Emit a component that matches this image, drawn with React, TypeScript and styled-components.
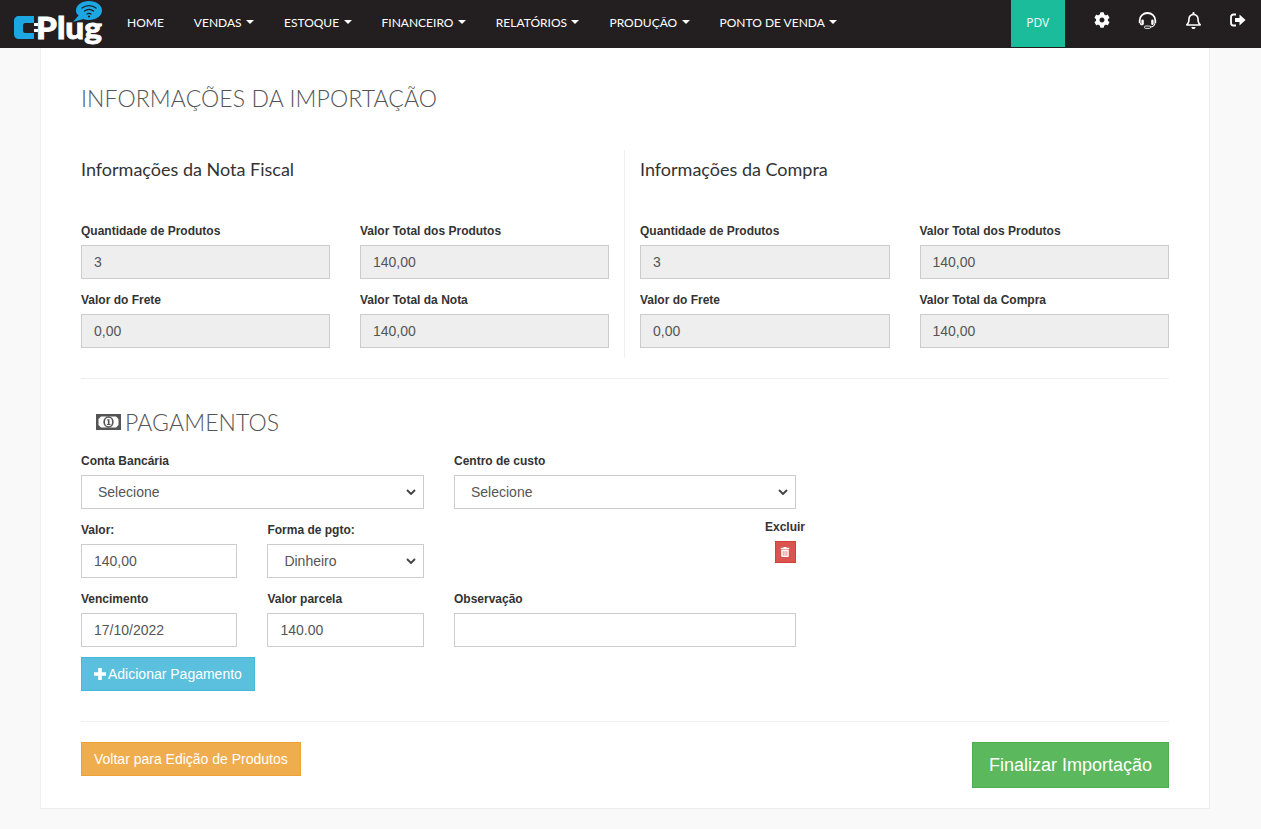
import React from "react";
import styled, { createGlobalStyle } from "styled-components";
import { FaCog, FaRegBell, FaTrashAlt } from "react-icons/fa";

const Global = createGlobalStyle`
  * { box-sizing: border-box; }
  html, body { margin: 0; padding: 0; height: 100%; overflow: hidden; }
  body { background: #f9f9f9; font-family: "Liberation Sans", Arial, sans-serif; font-size: 14px; color: #333; }
`;

const TopBar = styled.header`
  height: 48px;
  background: #231f20;
  display: flex;
  align-items: stretch;
`;
const LogoBox = styled.div`
  width: 112px;
  flex: none;
  padding-left: 13px;
`;
const Menu = styled.nav`
  display: flex;
  align-items: center;
  height: 44px;
`;
const MenuItem = styled.a`
  font-family: Lato, sans-serif;
  font-size: 12px;
  font-weight: 400;
  color: #fff;
  padding: 0 15px;
  display: flex;
  align-items: center;
  white-space: nowrap;
`;
const Caret = styled.span`
  display: inline-block;
  margin-left: 4.4px;
  border-top: 4px solid #fff;
  border-left: 4px solid transparent;
  border-right: 4px solid transparent;
`;
const RightBar = styled.div`
  margin-left: auto;
  display: flex;
  height: 47px;
`;
const PdvLink = styled.a`
  width: 54px;
  background: #1abc9c;
  color: #eafaf6;
  font-family: "Noto Sans", sans-serif;
  font-size: 12px;
  padding-bottom: 3px;
  display: flex;
  align-items: center;
  justify-content: center;
  margin-right: 15px;
`;
const IconLink = styled.a`
  width: 45.33px;
  height: 40px;
  display: flex;
  align-items: center;
  justify-content: center;
  color: #fff;
  font-size: 16px;
`;
const BellLink = styled(IconLink)`
  font-size: 17px;
`;

const Card = styled.main`
  width: 1170px;
  height: 761px;
  margin-left: 40px;
  background: #fff;
  border: 1px solid #eee;
  border-top: 0;
  padding: 37px 40px 0;
`;
const PageTitle = styled.h1`
  margin: 0 0 39px;
  font-family: Lato, sans-serif;
  font-weight: 300;
  font-size: 23px;
  letter-spacing: 0.1px;
  line-height: 26px;
  color: #555;
`;
const Summary = styled.section`
  display: flex;
  height: 208px;
`;
const SummaryColumn = styled.div<{ $divided?: boolean }>`
  padding-top: 9px;
  ${(p) =>
    p.$divided
      ? "width: 544px; padding-right: 15px; border-right: 1px solid #eee;"
      : "width: 529px; margin-left: 15px;"}
`;
const SubTitle = styled.h4`
  margin: 0 0 45px;
  font-family: Lato, sans-serif;
  font-weight: 400;
  font-size: 18px;
  line-height: 20px;
  color: #333;
`;
const TwoFields = styled.div`
  display: grid;
  grid-template-columns: 1fr 1fr;
  column-gap: 30px;
  row-gap: 14px;
`;
const Field = styled.div<{ $span?: number }>`
  display: flex;
  flex-direction: column;
  min-width: 0;
  ${(p) => (p.$span ? `grid-column: span ${p.$span};` : "")}
`;
const Label = styled.label`
  display: block;
  height: 15px;
  margin-bottom: 6px;
  font-size: 12px;
  line-height: 15px;
  font-weight: 700;
  color: #333;
  white-space: nowrap;
`;
const TextBox = styled.input`
  display: block;
  width: 100%;
  height: 34px;
  padding: 6px 12px;
  font-family: "Liberation Sans", Arial, sans-serif;
  font-size: 14px;
  color: #555;
  background: #fff;
  border: 1px solid #ccc;
  border-radius: 0;
  outline: none;
  &:disabled {
    background: #eee;
    color: #555;
    opacity: 1;
    -webkit-text-fill-color: #555;
  }
`;
const chevron = encodeURIComponent(
  '<svg xmlns="http://www.w3.org/2000/svg" width="10" height="6" viewBox="0 0 10 6"><path d="M1 1l4 4 4-4" fill="none" stroke="#444" stroke-width="1.900"/></svg>'
);
const SelectBox = styled.select`
  display: block;
  width: 100%;
  height: 34px;
  padding: 6px 20px 6px 16px;
  appearance: none;
  font-family: "Liberation Sans", Arial, sans-serif;
  font-size: 14px;
  color: #555;
  background: #fff url("data:image/svg+xml,${chevron}") no-repeat right 7px center;
  border: 1px solid #ccc;
  border-radius: 0;
  outline: none;
`;
const Rule = styled.hr<{ $top: number; $bottom: number }>`
  border: 0;
  border-top: 1px solid #eee;
  margin: ${(p) => p.$top}px 0 ${(p) => p.$bottom}px;
`;
const PaymentsTitle = styled.h2`
  display: flex;
  align-items: center;
  gap: 4px;
  margin: 0 0 19px;
  padding-left: 15px;
  font-family: Lato, sans-serif;
  font-weight: 300;
  font-size: 23px;
  letter-spacing: 0.1px;
  line-height: 26px;
  color: #555;
`;
const PaymentsGrid = styled.div`
  display: grid;
  width: 715px;
  grid-template-columns: 156.4px 156.6px 342px;
  column-gap: 30px;
  row-gap: 14px;
`;
const DeleteCell = styled.div`
  justify-self: end;
  width: 21px;
  display: flex;
  flex-direction: column;
  align-items: center;
  margin-top: -3px;
`;
const DeleteLabel = styled.span`
  font-size: 12px;
  line-height: 15px;
  font-weight: 700;
  color: #333;
  margin: 0 1px 6px 0;
  white-space: nowrap;
`;
const DeleteButton = styled.button`
  width: 21px;
  height: 22px;
  flex: none;
  padding: 0;
  display: flex;
  align-items: center;
  justify-content: center;
  background: #d9534f;
  border: 1px solid #d43f3a;
  color: #fff;
  font-size: 10px;
`;
const ActionButton = styled.button<{ $bg: string; $edge: string }>`
  height: 34px;
  padding: 0 12px;
  display: inline-flex;
  align-items: center;
  background: ${(p) => p.$bg};
  border: 1px solid ${(p) => p.$edge};
  color: #fff;
  font-family: "Liberation Sans", Arial, sans-serif;
  font-size: 14px;
  white-space: nowrap;
`;
const AddRow = styled.div`
  margin-top: 10px;
`;
const PlusMark = styled.svg`
  flex: none;
  width: 12px;
  height: 12px;
  margin-right: 2px;
`;
const Footer = styled.div`
  display: flex;
  justify-content: space-between;
  align-items: flex-start;
`;
const FinishButton = styled.button`
  width: 197px;
  height: 46px;
  padding: 0;
  background: #5cb85c;
  border: 1px solid #4cae4c;
  color: #fff;
  font-family: "Liberation Sans", Arial, sans-serif;
  font-size: 18px;
`;

const Logo = () => (
  <svg width="96" height="48" viewBox="0 0 96 48" aria-label="CPlug logo">
    <path d="M1 21c0-3 2-5 5-5h15v7h-9c-1 0-2 1-2 2v6c0 1 1 2 2 2h9v6H6c-3 0-5-2-5-5z" fill="#1ca6e2" />
    <text x="23" y="39" fontFamily="Lato, sans-serif" fontWeight="900" fontSize="31" fill="#fff" textLength="66" lengthAdjust="spacingAndGlyphs" stroke="#fff" strokeWidth="0.8">Plug</text>
    <rect x="21" y="23" width="4" height="3" fill="#fff" />
    <rect x="21" y="29" width="4" height="3" fill="#fff" />
    <path d="M76 1c7 0 13 4 13 9.500S83 20 76 20c-2 0-4-.4-5.500-1L60 22l5.500-6.500c-2-1.500-2.500-3-2.500-5C63 5 69 1 76 1z" fill="#1ca6e2" />
    <g fill="none" stroke="#231f20" strokeWidth="1.300" strokeLinecap="round">
      <path d="M69 8c4-3.200 10-3.200 14 0" />
      <path d="M71.500 11c2.700-2 6.300-2 9 0" />
      <path d="M74 14c1.200-.8 2.800-.8 4 0" />
    </g>
    <circle cx="76" cy="16.500" r="1.100" fill="#231f20" />
  </svg>
);

const Headset = () => (
  <svg width="19" height="17" viewBox="0 0 19 17" fill="none">
    <path d="M1.700 11V8.500a7.800 7.500 0 0 1 15.600 0V11" stroke="#fff" strokeWidth="1.800" />
    <rect x="3.400" y="7.500" width="2.400" height="5.500" rx="1.200" fill="#fff" />
    <rect x="13.200" y="7.500" width="2.400" height="5.500" rx="1.200" fill="#fff" />
    <path d="M2 11c.4 1.500 1.300 2 2.500 2M17 11c-.4 3-2.500 4-5 4" stroke="#fff" strokeWidth="1.100" />
    <rect x="6.500" y="14" width="6" height="2.400" rx="1.100" stroke="#fff" strokeWidth="0.900" />
  </svg>
);

const SignOut = () => (
  <svg width="16" height="14" viewBox="0 0 16 14" fill="none">
    <path d="M6 1.500H3.500C2 1.500 1 2.500 1 4v6c0 1.500 1 2.500 2.500 2.500H6" stroke="#fff" strokeWidth="1.800" />
    <path d="M5 5h4.500V1.500L15.500 7l-6 5.500V9H5z" fill="#fff" />
  </svg>
);

const MoneyIcon = () => (
  <svg width="25" height="16" viewBox="0 0 25 16">
    <path fillRule="evenodd" d="M0 0h25v16H0zM5 2.500 2.500 5v6L5 13.500h15l2.500-2.500V5L20 2.500z" fill="#555" />
    <ellipse cx="12.500" cy="8" rx="5.200" ry="5.700" fill="#555" />
    <ellipse cx="12.500" cy="8" rx="3.500" ry="4.200" fill="#fff" />
    <path d="M11.200 5.200h2.300v4.700h1v1.100h-3.600V9.900h1V6.500h-.7z" fill="#555" />
  </svg>
);

const menu: [string, boolean][] = [
  ["HOME", false],
  ["VENDAS", true],
  ["ESTOQUE", true],
  ["FINANCEIRO", true],
  ["RELATÓRIOS", true],
  ["PRODUÇÃO", true],
  ["PONTO DE VENDA", true],
];

const SummaryBlock = ({ title, last }: { title: string; last: string }) => (
  <>
    <SubTitle>{title}</SubTitle>
    <TwoFields>
      <Field>
        <Label>Quantidade de Produtos</Label>
        <TextBox disabled defaultValue="3" />
      </Field>
      <Field>
        <Label>Valor Total dos Produtos</Label>
        <TextBox disabled defaultValue="140,00" />
      </Field>
      <Field>
        <Label>Valor do Frete</Label>
        <TextBox disabled defaultValue="0,00" />
      </Field>
      <Field>
        <Label>{last}</Label>
        <TextBox disabled defaultValue="140,00" />
      </Field>
    </TwoFields>
  </>
);

export default function App() {
  return (
    <>
      <Global />
      <TopBar>
        <LogoBox>
          <Logo />
        </LogoBox>
        <Menu>
          {menu.map(([name, caret]) => (
            <MenuItem key={name}>
              {name}
              {caret && <Caret />}
            </MenuItem>
          ))}
        </Menu>
        <RightBar>
          <PdvLink>PDV</PdvLink>
          <IconLink><FaCog /></IconLink>
          <IconLink><Headset /></IconLink>
          <BellLink><FaRegBell /></BellLink>
          <IconLink><SignOut /></IconLink>
        </RightBar>
      </TopBar>
      <Card>
        <PageTitle>INFORMAÇÕES DA IMPORTAÇÃO</PageTitle>
        <Summary>
          <SummaryColumn $divided>
            <SummaryBlock title="Informações da Nota Fiscal" last="Valor Total da Nota" />
          </SummaryColumn>
          <SummaryColumn>
            <SummaryBlock title="Informações da Compra" last="Valor Total da Compra" />
          </SummaryColumn>
        </Summary>
        <Rule $top={20} $bottom={30} />
        <PaymentsTitle>
          <MoneyIcon />
          PAGAMENTOS
        </PaymentsTitle>
        <PaymentsGrid>
          <Field $span={2}>
            <Label>Conta Bancária</Label>
            <SelectBox defaultValue="s"><option value="s">Selecione</option></SelectBox>
          </Field>
          <Field>
            <Label>Centro de custo</Label>
            <SelectBox defaultValue="s"><option value="s">Selecione</option></SelectBox>
          </Field>
          <Field>
            <Label>Valor:</Label>
            <TextBox defaultValue="140,00" />
          </Field>
          <Field>
            <Label>Forma de pgto:</Label>
            <SelectBox defaultValue="d"><option value="d">Dinheiro</option></SelectBox>
          </Field>
          <DeleteCell>
            <DeleteLabel>Excluir</DeleteLabel>
            <DeleteButton><FaTrashAlt /></DeleteButton>
          </DeleteCell>
          <Field>
            <Label>Vencimento</Label>
            <TextBox defaultValue="17/10/2022" />
          </Field>
          <Field>
            <Label>Valor parcela</Label>
            <TextBox defaultValue="140.00" />
          </Field>
          <Field>
            <Label>Observação</Label>
            <TextBox />
          </Field>
        </PaymentsGrid>
        <AddRow>
          <ActionButton $bg="#5bc0de" $edge="#46b8da">
            <PlusMark viewBox="0 0 12 12">
              <path d="M4.200 0h3.600v4.200H12v3.600H7.800V12H4.200V7.800H0V4.200h4.200z" fill="#fff" />
            </PlusMark>
            Adicionar Pagamento
          </ActionButton>
        </AddRow>
        <Rule $top={30} $bottom={20} />
        <Footer>
          <ActionButton $bg="#f0ad4e" $edge="#eea236">Voltar para Edição de Produtos</ActionButton>
          <FinishButton>Finalizar Importação</FinishButton>
        </Footer>
      </Card>
    </>
  );
}
